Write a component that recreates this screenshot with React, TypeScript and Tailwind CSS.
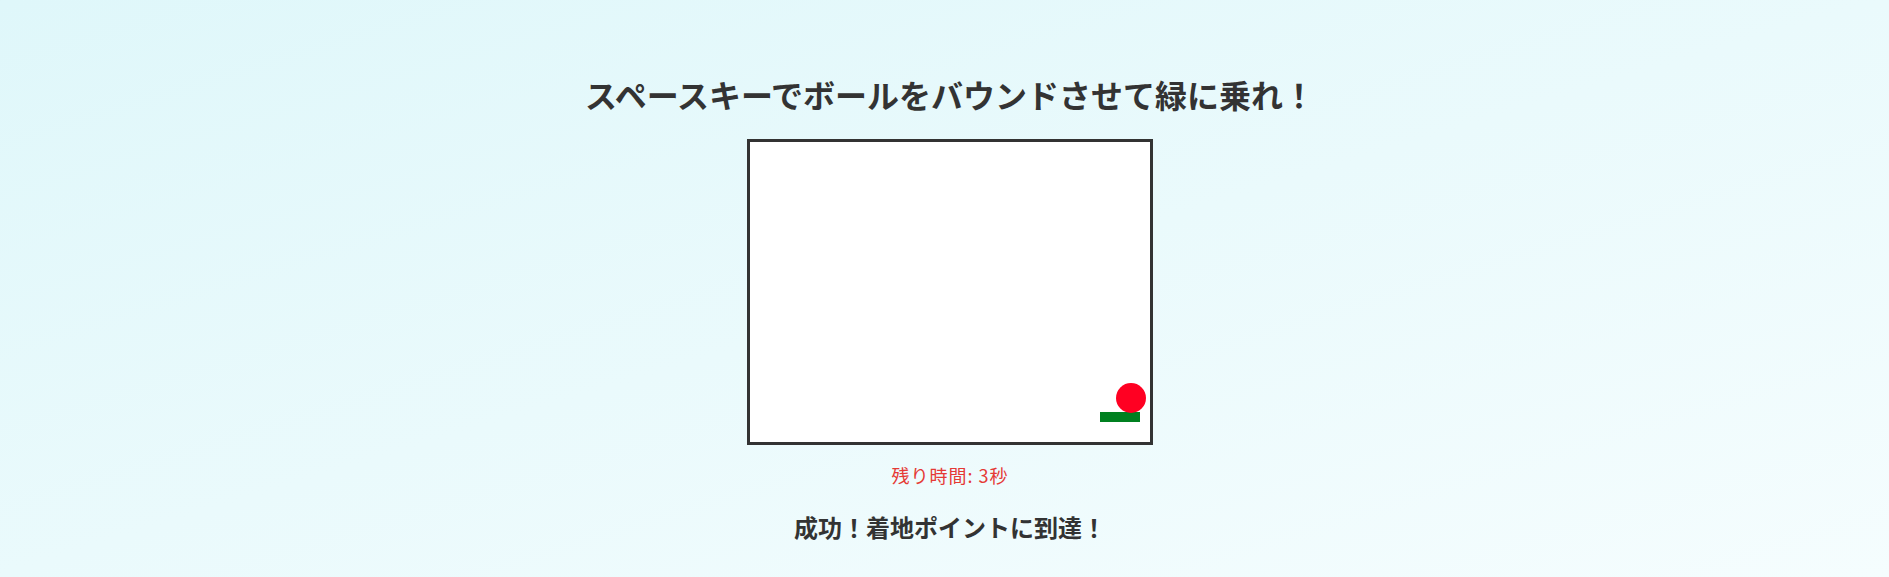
import React from "react";

export default function App() {
  return (
    <div
      className="min-h-screen w-full bg-gradient-to-br from-[#dff7fa] to-[#f5fdfe] flex flex-col items-center pt-[74px] pl-[11px] text-[#333333]"
      style={{ fontFamily: '"Noto Sans CJK JP", "Noto Sans", sans-serif' }}
    >
      <h1 className="text-[32px] leading-[40px] font-bold">
        スペースキーでボールをバウンドさせて緑に乗れ！
      </h1>
      <div className="mt-[25px] w-[406px] h-[306px] border-[3px] border-[#333333] bg-white">
        <svg width="400" height="300" viewBox="0 0 400 300" className="block">
          <rect x="350" y="270" width="40" height="10" fill="#008020" />
          <circle cx="381" cy="256" r="15" fill="#ff0022" />
        </svg>
      </div>
      <p className="mt-[18px] text-[18px] leading-[24px] tracking-[1px] text-[#e53935]">残り時間: 3秒</p>
      <p className="mt-[24px] text-[24px] leading-[32px] font-bold">成功！着地ポイントに到達！</p>
    </div>
  );
}
